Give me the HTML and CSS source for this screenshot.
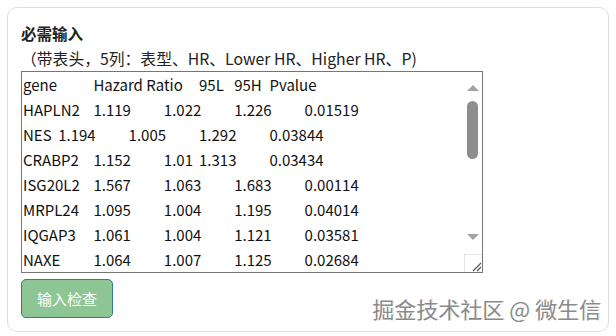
FILE: index.html
```html
<!DOCTYPE html>
<html lang="zh-CN">
<head>
    <meta charset="UTF-8">
    <meta name="viewport" content="width=device-width, initial-scale=1.0">
    <title>必需输入</title>
    <link rel="stylesheet" href="styles.css">
</head>
<body>
    <div class="panel">
        <div class="panel-title">必需输入</div>
        <div class="panel-hint">（带表头，5列：表型、HR、Lower HR、Higher HR、P)</div>
        <div class="input-wrap">
            <textarea class="data-input" spellcheck="false">gene&#9;Hazard Ratio&#9;95L&#9;95H&#9;Pvalue
HAPLN2&#9;1.119&#9;1.022&#9;1.226&#9;0.01519
NES&#9;1.194&#9;1.005&#9;1.292&#9;0.03844
CRABP2&#9;1.152&#9;1.01&#9;1.313&#9;0.03434
ISG20L2&#9;1.567&#9;1.063&#9;1.683&#9;0.00114
MRPL24&#9;1.095&#9;1.004&#9;1.195&#9;0.04014
IQGAP3&#9;1.061&#9;1.004&#9;1.121&#9;0.03581
NAXE&#9;1.064&#9;1.007&#9;1.125&#9;0.02684
CDCA8&#9;1.083&#9;1.012&#9;1.159&#9;0.02137
KIF20A&#9;1.072&#9;1.003&#9;1.146&#9;0.04122
PLOD2&#9;1.118&#9;1.021&#9;1.224&#9;0.01633
SPP1&#9;1.041&#9;1.002&#9;1.082&#9;0.03811
TOP2A&#9;1.066&#9;1.009&#9;1.127&#9;0.02290
CCNB1&#9;1.097&#9;1.011&#9;1.190&#9;0.02618
MKI67&#9;1.058&#9;1.001&#9;1.118&#9;0.04576
ANLN&#9;1.101&#9;1.015&#9;1.195&#9;0.02103</textarea>
            <!-- scrollbar drawn by hand, the headless browser hides native ones -->
            <div class="scrollbar">
                <div class="sb-arrow sb-up">
                    <svg width="12" height="6" viewBox="0 0 12 6"><polygon points="0,6 6,0 12,6" fill="#a3a3a3"/></svg>
                </div>
                <div class="sb-track">
                    <div class="sb-thumb"></div>
                </div>
                <div class="sb-arrow sb-down">
                    <svg width="12" height="6" viewBox="0 0 12 6"><polygon points="0,0 12,0 6,6" fill="#a3a3a3"/></svg>
                </div>
            </div>
            <div class="resizer">
                <svg width="18" height="18" viewBox="0 0 18 18"><path d="M8 16 L16 8 M12 16 L16 12" stroke="#555" stroke-width="1.1"/></svg>
            </div>
        </div>
        <button class="check-btn">输入检查</button>
    </div>
    <div class="watermark">掘金技术社区 @ 微生信</div>
</body>
</html>
```

FILE: styles.css
```css
body {
    margin: 0;
    font-family: "Noto Sans CJK SC", "Noto Sans", sans-serif;
    color: #222;
    background-color: white;
    position: relative;
    height: 336px;
    overflow: hidden;
}
.panel {
    margin: 7px;
    padding: 13px 13px 13px 13px;
    border: 1px solid #dedede;
    border-radius: 10px;
    display: flex;
    flex-direction: column;
    align-items: flex-start;
}
.panel-title {
    font-size: 15.5px;
    font-weight: bold;
    line-height: 25px;
    color: #222;
}
.panel-hint {
    font-size: 15.8px;
    line-height: 25px;
    color: #222;
}
.input-wrap {
    position: relative;
    width: 462px;
    height: 202px;
}
.data-input {
    box-sizing: border-box;
    display: block;
    width: 462px;
    height: 202px;
    margin: 0;
    padding: 0 0 0 1px;
    border: 1px solid #767676;
    font-family: "Noto Sans CJK SC", sans-serif;
    font-size: 15px;
    line-height: 25px;
    color: #111;
    tab-size: 35.2px;
    white-space: pre;
    resize: none;
    outline: none;
    overflow: hidden;
}
.scrollbar {
    position: absolute;
    top: 1px;
    right: 1px;
    width: 18px;
    height: 182px;
    background: #fff;
    display: flex;
    flex-direction: column;
}
.sb-arrow {
    height: 28px;
    display: flex;
    justify-content: center;
    padding-left: 0;
    padding-right: 1px;
}
.sb-up {
    align-items: flex-end;
    padding-bottom: 9px;
    box-sizing: border-box;
}
.sb-down {
    align-items: flex-start;
    padding-top: 8px;
    box-sizing: border-box;
}
.sb-track {
    flex: 1;
    padding: 1px 4px 0 3px;
}
.sb-thumb {
    height: 58px;
    background-color: #8e8e8e;
    border-radius: 6px;
}
.resizer {
    position: absolute;
    right: 1px;
    bottom: 1px;
    width: 18px;
    height: 18px;
    box-sizing: border-box;
    background: #fff;
    border-left: 1px solid #e4e4e4;
    border-top: 1px solid #e4e4e4;
    display: flex;
    align-items: flex-end;
    justify-content: flex-end;
}
.resizer svg {
    display: block;
    margin: 0 -1px -1px 0;
}
.check-btn {
    margin-top: 6px;
    width: 92px;
    height: 39px;
    background-color: #8dc594;
    color: white;
    border: 1px solid #2f7f86;
    border-radius: 5px;
    font-family: "Noto Sans CJK SC", sans-serif;
    font-size: 15px;
    cursor: pointer;
}
.watermark {
    position: absolute;
    right: 15px;
    top: 292px;
    font-size: 22px;
    line-height: 32px;
    color: #8a8a8a;
    text-shadow: 1px 1px 0 #fff, -1px 0 0 #fff, 0 -1px 0 #fff, 1px 0 0 #c8c8c8;
    pointer-events: none;
}
```
